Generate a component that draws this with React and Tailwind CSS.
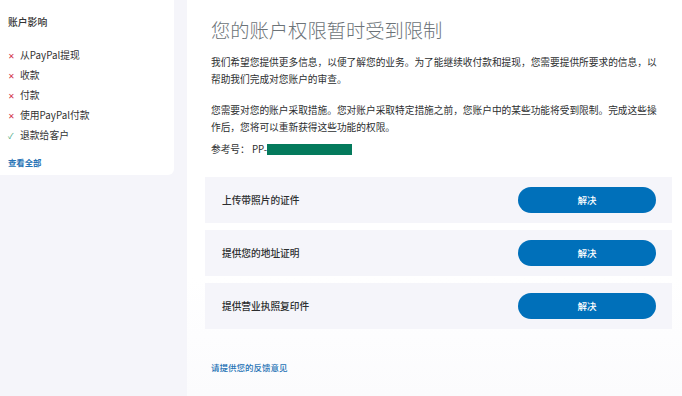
const font = { fontFamily: '"Noto Sans CJK SC", "Noto Sans", sans-serif' };

const impacts = [
	{ ok: false, label: "从PayPal提现" },
	{ ok: false, label: "收款" },
	{ ok: false, label: "付款" },
	{ ok: false, label: "使用PayPal付款" },
	{ ok: true, label: "退款给客户" },
];

const tasks = ["上传带照片的证件", "提供您的地址证明", "提供营业执照复印件"];

export default function App() {
	return (
		<div className="flex w-[682px] h-[396px] bg-[#f5f5fa] overflow-hidden" style={font}>
			<div className="w-[187px] shrink-0">
				<div className="w-[174px] h-[175px] bg-white rounded-br-md pl-2 pt-[15px]">
					<div className="text-[9.8px] font-medium text-[#333]">账户影响</div>
					<ul className="mt-[19px] space-y-[6px]">
						{impacts.map((it) => (
							<li key={it.label} className="flex items-center h-[14px] text-[9.8px] text-[#333]">
								<span className={`w-[12px] text-[8px] ${it.ok ? "text-[#3aa37a]" : "text-[#d2334c]"}`}>
									{it.ok ? "✓" : "✕"}
								</span>
								{it.label}
							</li>
						))}
					</ul>
					<div className="mt-[13px] text-[8.4px] font-bold text-[#2673b5]">查看全部</div>
				</div>
			</div>
			<div className="flex-1 bg-gradient-to-b from-white from-70% to-[#fbfbfd] pl-[18px] pr-[10px] pt-[15px]">
				<h1 className="pl-[6px] text-[19.3px] font-light text-[#6c7378] leading-[30px]">您的账户权限暂时受到限制</h1>
				<div className="pl-[6px] mt-[9px] w-[458px] text-[9.7px] leading-[17px] text-[#2c2e2f]">
					<p>我们希望您提供更多信息，以便了解您的业务。为了能继续收付款和提现，您需要提供所要求的信息，以帮助我们完成对您账户的审查。</p>
					<p className="mt-[14px]">您需要对您的账户采取措施。您对账户采取特定措施之前，您账户中的某些功能将受到限制。完成这些操作后，您将可以重新获得这些功能的权限。</p>
					<p className="mt-[5px] flex items-center">
						参考号：&nbsp;PP-<span className="inline-block w-[85px] h-[11px] bg-[#047a5c]"></span>
					</p>
				</div>
				<div className="mt-[19px] space-y-[7px]">
					{tasks.map((t) => (
						<div key={t} className="flex items-center justify-between h-[46px] bg-[#f5f5fa] pl-[17px] pr-[16px]">
							<span className="text-[9.7px] font-medium text-[#2c2e2f]">{t}</span>
							<button className="w-[138px] h-[26px] rounded-full bg-[#0070ba] text-white text-[9.5px] font-medium">解决</button>
						</div>
					))}
				</div>
				<div className="mt-[32px] pl-[6px] text-[8.5px] font-medium text-[#2673b5]">请提供您的反馈意见</div>
			</div>
		</div>
	);
}
